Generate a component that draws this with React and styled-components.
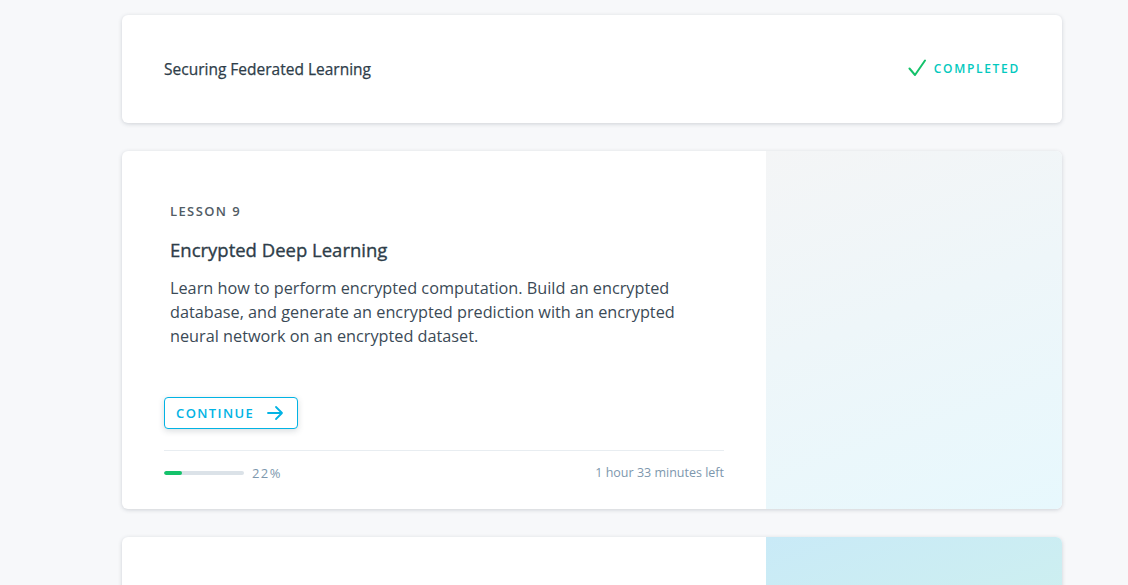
import React from "react";
import styled, { createGlobalStyle } from "styled-components";

const Global = createGlobalStyle`
  html, body { margin: 0; padding: 0; background: #f7f8fa; }
  body { font-family: "Open Sans", "Noto Sans", sans-serif; color: #2e3d49; -webkit-font-smoothing: antialiased; }
`;

const Page = styled.div`
  padding: 15px 66px 0 122px;
  display: flex;
  flex-direction: column;
  gap: 28px;
  width: 940px;
`;

const Card = styled.div`
  background: #fff;
  border-radius: 6px;
  box-shadow: 0 1px 4px rgba(46, 61, 73, 0.2);
  overflow: hidden;
`;

const CompactRow = styled(Card)`
  height: 108px;
  display: flex;
  align-items: center;
  justify-content: space-between;
  padding: 0 42px 0 42px;
  box-sizing: border-box;
`;

const CompactTitle = styled.div`
  font-size: 15.5px;
  font-weight: 400;
  color: #2e3d49;
  -webkit-text-stroke: 0.25px #2e3d49;
  margin-top: -1px;
`;

const Status = styled.div`
  display: flex;
  align-items: center;
  gap: 8px;
  font-size: 12px;
  font-weight: 600;
  letter-spacing: 1.7px;
  color: #02c9be;
  margin-top: -2px;
`;

const LessonCard = styled(Card)`
  display: grid;
  grid-template-columns: 644px 296px;
  min-height: ${(p) => p.$minH || 358}px;
`;

const Main = styled.div`
  display: flex;
  flex-direction: column;
  padding: 50px 42px 0;
`;

const Body = styled.div`
  padding: 0 6px;
  display: flex;
  flex-direction: column;
`;

const Label = styled.div`
  font-size: 13px;
  line-height: 20px;
  font-weight: 600;
  letter-spacing: 1.4px;
  color: #525c65;
`;

const Title = styled.h2`
  margin: 15px 0 0;
  font-size: 18.5px;
  line-height: 28px;
  font-weight: 400;
  color: #2e3d49;
  -webkit-text-stroke: 0.35px #2e3d49;
`;

const Desc = styled.p`
  margin: 12px 0 0;
  font-size: 16.25px;
  line-height: 24px;
  color: #3b4a56;
  max-width: 525px;
`;

const Button = styled.button`
  margin-top: 49px;
  align-self: flex-start;
  height: 32px;
  display: flex;
  align-items: center;
  gap: 12px;
  padding: 0 13px 0 11px;
  background: #fff;
  border: 1px solid #02b3e4;
  border-radius: 4px;
  box-shadow: 0 2px 6px rgba(46, 61, 73, 0.18);
  color: #02b3e4;
  font-family: "Open Sans", sans-serif;
  font-size: 13px;
  font-weight: 600;
  letter-spacing: 1.4px;
  cursor: pointer;
`;

const Footer = styled.div`
  margin-top: 21px;
  border-top: 1px solid #e8edf1;
  display: flex;
  align-items: center;
  justify-content: space-between;
  padding: 13px 0 27px;
  font-size: 12.5px;
  line-height: 18px;
  color: #7d97ad;
`;

const Progress = styled.div`
  display: flex;
  align-items: center;
  gap: 8px;
`;

const Track = styled.div`
  width: 80px;
  height: 4px;
  border-radius: 2px;
  background: #dbe2e8;
  overflow: hidden;
`;

const Fill = styled.div`
  height: 100%;
  background: #15c26b;
  border-radius: 2px;
`;

const Pct = styled.span`
  font-size: 13px;
  letter-spacing: 1.4px;
`;

const Visual = styled.div`
  background: ${(p) => p.$bg};
`;

const Check = () => (
  <svg width="18" height="18" viewBox="0 0 18 18" fill="none">
    <path d="M1.5 9.5 L7 16 L17 1.5" stroke="#15c26b" strokeWidth="2" strokeLinecap="round" strokeLinejoin="round" />
  </svg>
);

const Arrow = () => (
  <svg width="18" height="18" viewBox="0 0 18 18" fill="none">
    <path d="M2 9 H16 M10 3 L16 9 L10 15" stroke="#02b3e4" strokeWidth="1.8" strokeLinecap="round" strokeLinejoin="round" />
  </svg>
);

export default function App() {
  const pct = 22;
  return (
    <>
      <Global />
      <Page>
        <CompactRow>
          <CompactTitle>Securing Federated Learning</CompactTitle>
          <Status>
            <Check />
            COMPLETED
          </Status>
        </CompactRow>

        <LessonCard>
          <Main>
            <Body>
              <Label>LESSON 9</Label>
              <Title>Encrypted Deep Learning</Title>
              <Desc>
                Learn how to perform encrypted computation. Build an encrypted database, and generate an encrypted
                prediction with an encrypted neural network on an encrypted dataset.
              </Desc>
            </Body>
            <Button>
              CONTINUE
              <Arrow />
            </Button>
            <Footer>
              <Progress>
                <Track>
                  <Fill style={{ width: `${pct}%` }} />
                </Track>
                <Pct>{pct}%</Pct>
              </Progress>
              <span>1 hour 33 minutes left</span>
            </Footer>
          </Main>
          <Visual $bg="linear-gradient(160deg, #f4f5f6 0%, #eef6f9 45%, #e7f8fd 100%)" />
        </LessonCard>

        <LessonCard $minH={200}>
          <Main />
          <Visual $bg="linear-gradient(160deg, #c9eaf7 0%, #cdeff0 55%, #cdf2e6 100%)" />
        </LessonCard>
      </Page>
    </>
  );
}
